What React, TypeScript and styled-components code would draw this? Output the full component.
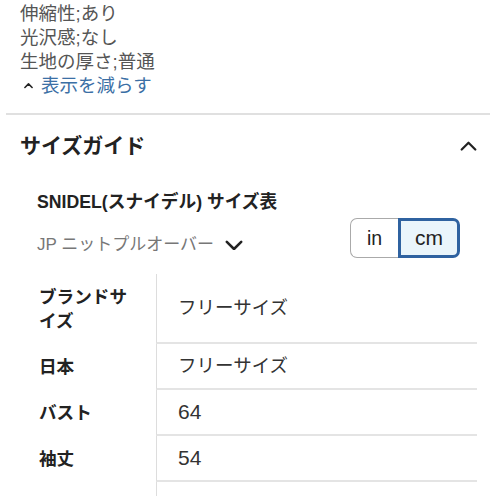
import React from "react";
import styled, { createGlobalStyle } from "styled-components";

const Global = createGlobalStyle`
  html, body { margin: 0; padding: 0; background: #fff; }
  body { font-family: "Liberation Sans", "Noto Sans CJK JP", sans-serif; color: #222; }
  * { box-sizing: border-box; }
`;

const Page = styled.div`
  width: 496px;
  height: 496px;
  overflow: hidden;
  background: #fff;
`;

const Details = styled.div`
  padding: 2px 20px 0;
  display: flex;
  flex-direction: column;
`;

const DetailLine = styled.div`
  font-size: 18.5px;
  line-height: 24px;
  color: #555;
  white-space: nowrap;
`;

const ShowLess = styled.button`
  all: unset;
  box-sizing: border-box;
  display: flex;
  align-items: center;
  gap: 8px;
  font-size: 18.5px;
  line-height: 24px;
  color: #3b6fa5;
  cursor: pointer;
  padding-left: 4px;
`;

const Divider = styled.hr`
  margin: 15px 6px 0;
  border: none;
  height: 2px;
  background: #e0e0e0;
`;

const Section = styled.section`
  padding: 0 19px 0 20px;
`;

const SectionHeader = styled.div`
  display: flex;
  align-items: center;
  justify-content: space-between;
  margin-top: 17px;
  height: 28px;
`;

const SectionTitle = styled.h2`
  margin: 0;
  font-size: 21px;
  line-height: 28px;
  font-weight: 700;
  color: #222;
`;

const Sub = styled.div`
  padding: 0 17px;
  margin-top: 30px;
`;

const SubTitle = styled.div`
  font-size: 17.7px;
  line-height: 24px;
  font-weight: 700;
  color: #222;
  white-space: nowrap;
`;

const ControlsRow = styled.div`
  display: flex;
  align-items: flex-end;
  justify-content: space-between;
  margin-top: 4px;
`;

const Dropdown = styled.button`
  all: unset;
  box-sizing: border-box;
  display: flex;
  align-items: center;
  gap: 11px;
  font-size: 17px;
  line-height: 24px;
  color: #777;
  cursor: pointer;
  padding-bottom: 1px;
`;

const Toggle = styled.div`
  display: flex;
  height: 40px;
`;

const ToggleBtn = styled.button<{ $active?: boolean; $side: "left" | "right" }>`
  all: unset;
  box-sizing: border-box;
  display: flex;
  align-items: center;
  justify-content: center;
  height: 40px;
  font-family: "Liberation Sans", sans-serif;
  font-size: ${(p) => (p.$active ? "21px" : "19.5px")};
  color: #222;
  width: ${(p) => (p.$side === "left" ? "48px" : "62px")};
  background: ${(p) => (p.$active ? "#eaf5fb" : "#fff")};
  border: ${(p) => (p.$active ? "3px solid #2f62a0" : "1px solid #aaa")};
  border-right: ${(p) => (p.$side === "left" ? "none" : undefined)};
  border-radius: ${(p) => (p.$side === "left" ? "7px 0 0 7px" : "0 7px 7px 0")};
`;

const Table = styled.div`
  margin-top: 16px;
  display: grid;
  grid-template-columns: 136px 1fr;
`;

const LabelCell = styled.div`
  padding: 11px 18px 11px 19px;
  font-size: 17.6px;
  line-height: 24px;
  font-weight: 700;
  color: #222;
  display: flex;
  align-items: center;
`;

const ValueCell = styled.div`
  padding: 10px 21px;
  border-left: 1px solid #ddd;
  border-bottom: 2px solid #e4e4e4;
  font-size: 18.5px;
  line-height: 24px;
  color: #333;
  display: flex;
  align-items: center;
`;

const Num = styled.span`
  font-size: 21px;
`;

const Chevron = ({ dir, size, stroke = 2.6 }: { dir: "up" | "down"; size: number; stroke?: number }) => (
  <svg width={size} height={size * 0.6} viewBox="0 0 20 12" fill="none">
    <path
      d={dir === "up" ? "M2 10 L10 2 L18 10" : "M2 2 L10 10 L18 2"}
      stroke="#222"
      strokeWidth={stroke}
      strokeLinecap="round"
      strokeLinejoin="round"
    />
  </svg>
);

const rows: [string, string][] = [
  ["ブランドサイズ", "フリーサイズ"],
  ["日本", "フリーサイズ"],
  ["バスト", "64"],
  ["袖丈", "54"],
  ["肩幅", "52"],
];

export default function App() {
  return (
    <Page>
      <Global />
      <Details>
        <DetailLine>伸縮性;あり</DetailLine>
        <DetailLine>光沢感;なし</DetailLine>
        <DetailLine>生地の厚さ;普通</DetailLine>
        <ShowLess>
          <Chevron dir="up" size={9} stroke={3.5} />
          表示を減らす
        </ShowLess>
      </Details>
      <Divider />
      <Section>
        <SectionHeader>
          <SectionTitle>サイズガイド</SectionTitle>
          <Chevron dir="up" size={17} />
        </SectionHeader>
        <Sub>
          <SubTitle>SNIDEL(スナイデル) サイズ表</SubTitle>
          <ControlsRow>
            <Dropdown>
              JP ニットプルオーバー
              <Chevron dir="down" size={18} stroke={2.8} />
            </Dropdown>
            <Toggle>
              <ToggleBtn $side="left">in</ToggleBtn>
              <ToggleBtn $side="right" $active>
                cm
              </ToggleBtn>
            </Toggle>
          </ControlsRow>
        </Sub>
        <Table>
          {rows.map(([k, v]) => (
            <React.Fragment key={k}>
              <LabelCell>{k}</LabelCell>
              <ValueCell>{/^\d+$/.test(v) ? <Num>{v}</Num> : v}</ValueCell>
            </React.Fragment>
          ))}
        </Table>
      </Section>
    </Page>
  );
}
